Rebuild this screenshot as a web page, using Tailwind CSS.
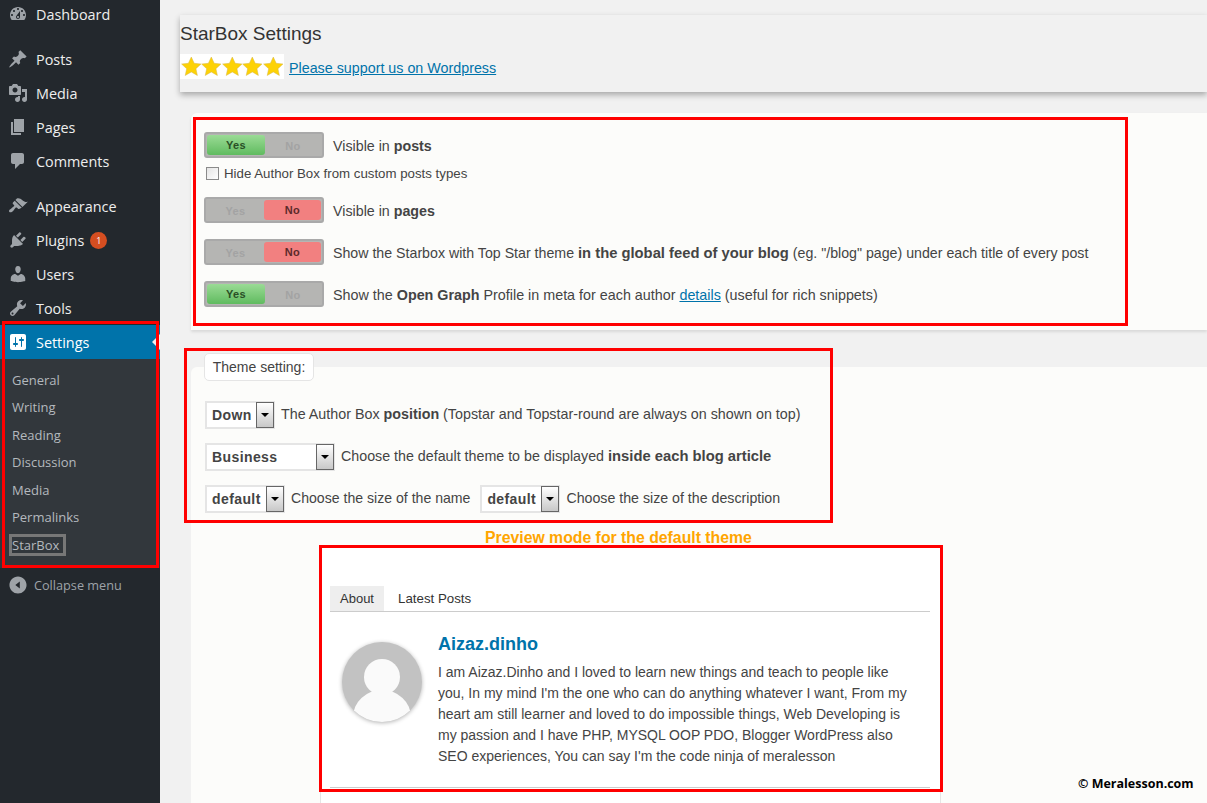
<!doctype html>
<html lang="en">
<head>
  <meta charset="UTF-8">
  <title>StarBox Settings</title>
  <script src="https://cdn.jsdelivr.net/npm/@tailwindcss/browser@4"></script>
</head>
<body class="relative h-[803px] w-[1207px] overflow-hidden bg-[#f1f1f1] font-['Liberation_Sans',sans-serif] text-[14.25px] leading-[21px] text-[#444]">
  <div class="flex h-[803px]">
    <!-- admin menu -->
    <nav class="h-full w-[160px] shrink-0 overflow-hidden bg-[#23282d] font-['Open_Sans',sans-serif] text-[14.4px] leading-[21px] text-[#eee]">
      <div class="-mt-[3px]">
        <a class="flex h-[34px] items-center"><svg class="mx-2 h-5 w-5 fill-[#9ea3a8]" viewBox="0 0 20 20"><path d="M3.76 16h12.48c1.1-1.37 1.76-3.11 1.76-5 0-4.42-3.58-8-8-8s-8 3.58-8 8c0 1.89.66 3.63 1.76 5zM10 4c.55 0 1 .45 1 1s-.45 1-1 1-1-.45-1-1 .45-1 1-1zM6 6c.55 0 1 .45 1 1s-.45 1-1 1-1-.45-1-1 .45-1 1-1zm8 0c.55 0 1 .45 1 1s-.45 1-1 1-1-.45-1-1 .45-1 1-1zm-5.37 5.55L12 7v6c0 1.1-.9 2-2 2s-2-.9-2-2c0-.57.24-1.08.63-1.45zM4 10c.55 0 1 .45 1 1s-.45 1-1 1-1-.45-1-1 .45-1 1-1zm12 0c.55 0 1 .45 1 1s-.45 1-1 1-1-.45-1-1 .45-1 1-1zm-5 3c0-.55-.45-1-1-1s-1 .45-1 1 .45 1 1 1 1-.45 1-1z"/></svg>Dashboard</a>
        <div class="h-[11px]"></div>
        <a class="flex h-[34px] items-center"><svg class="mx-2 h-5 w-5 fill-[#9ea3a8]" viewBox="0 0 20 20"><path d="M10.44 3.02l1.82-1.82 6.36 6.35-1.83 1.82c-1.05-.68-2.48-.57-3.41.36l-.75.75c-.92.93-1.04 2.35-.35 3.41l-1.83 1.82-2.41-2.41-2.8 2.79c-.42.42-3.38 2.71-3.8 2.29s1.86-3.39 2.28-3.81l2.79-2.79L4.1 9.36l1.83-1.82c1.05.69 2.48.57 3.4-.36l.75-.75c.93-.92 1.05-2.35.36-3.41z"/></svg>Posts</a>
        <a class="flex h-[34px] items-center"><svg class="mx-2 h-5 w-5 fill-[#9ea3a8]" viewBox="0 0 20 20"><path d="M13 11V4c0-.55-.45-1-1-1h-1.67L9 1H5L3.67 3H2c-.55 0-1 .45-1 1v7c0 .55.45 1 1 1h10c.55 0 1-.45 1-1zM7 4.5c1.38 0 2.5 1.12 2.5 2.5S8.38 9.5 7 9.5 4.5 8.38 4.5 7 5.62 4.5 7 4.5zM14 6h5v10.5c0 1.38-1.12 2.5-2.5 2.5S14 17.88 14 16.5s1.12-2.5 2.5-2.5c.17 0 .34.02.5.05V9h-3V6zm-4 8.05V13h2v3.5c0 1.38-1.12 2.5-2.5 2.5S7 17.88 7 16.5 8.12 14 9.5 14c.17 0 .34.02.5.05z"/></svg>Media</a>
        <a class="flex h-[34px] items-center"><svg class="mx-2 h-5 w-5 fill-[#9ea3a8]" viewBox="0 0 20 20"><path d="M6 15V2h10v13H6zm-1 1h8v2H3V5h2v11z"/></svg>Pages</a>
        <a class="flex h-[34px] items-center"><svg class="mx-2 h-5 w-5 fill-[#9ea3a8]" viewBox="0 0 20 20"><path d="M5 2h9c1.1 0 2 .9 2 2v7c0 1.1-.9 2-2 2h-2l-5 5v-5H5c-1.1 0-2-.9-2-2V4c0-1.1.9-2 2-2z"/></svg>Comments</a>
        <div class="h-[11px]"></div>
        <a class="flex h-[34px] items-center"><svg class="mx-2 h-5 w-5 fill-[#9ea3a8]" viewBox="0 0 20 20"><path d="M14.48 11.06L7.41 3.99l1.5-1.5c.5-.56 2.3-.47 3.51.32 1.21.8 1.43 1.28 2.91 2.1 1.18.64 2.45 1.26 4.45.85zm-.71.71L6.7 4.7 4.93 6.47c-.39.39-.39 1.02 0 1.41l1.06 1.06c.39.39.39 1.03 0 1.42-.6.6-1.43 1.11-2.21 1.69-.35.26-.7.53-1.01.84C1.43 13.23.4 14.89 1.41 15.9c1.01 1.01 2.67-.02 3.66-1.01.31-.31.58-.66.84-1.01.58-.78 1.09-1.61 1.69-2.21.39-.39 1.03-.39 1.42 0l1.06 1.06c.39.39 1.02.39 1.41 0z"/></svg>Appearance</a>
        <a class="flex h-[34px] items-center"><svg class="mx-2 h-5 w-5 fill-[#9ea3a8]" viewBox="0 0 20 20"><path d="M13.11 4.36L9.87 7.6 8 5.73l3.24-3.24c.35-.34 1.05-.2 1.56.32.52.51.66 1.21.31 1.55zm-8 1.77l.91-1.12 9.01 9.01-1.19.84c-.71.71-2.63 1.16-3.82 1.16H6.14L4.9 17.26c-.59.59-1.54.59-2.12 0-.59-.58-.59-1.53 0-2.12l1.24-1.24v-3.88c0-1.13.4-3.19 1.09-3.89zm7.26 3.97l3.24-3.24c.34-.35 1.04-.21 1.55.31.52.51.66 1.21.31 1.55l-3.24 3.25z"/></svg>Plugins<span class="ml-[6px] flex h-[17px] w-[17px] items-center justify-center rounded-full bg-[#d54e21] text-[9px] text-white">1</span></a>
        <a class="flex h-[34px] items-center"><svg class="mx-2 h-5 w-5 fill-[#9ea3a8]" viewBox="0 0 20 20"><path d="M10 9.25c-2.27 0-2.73-3.44-2.73-3.44C7 4.02 7.82 2 9.97 2c2.16 0 2.98 2.02 2.71 3.81 0 0-.41 3.44-2.68 3.44zm0 2.57L12.72 10c2.39 0 4.52 2.33 4.52 4.53v2.49s-3.65 1.13-7.24 1.13c-3.65 0-7.24-1.13-7.24-1.13v-2.49c0-2.25 1.94-4.48 4.47-4.48z"/></svg>Users</a>
        <a class="flex h-[34px] items-center"><svg class="mx-2 h-5 w-5 fill-[#9ea3a8]" viewBox="0 0 20 20"><path d="M16.68 9.77c-1.34 1.34-3.3 1.67-4.95.99l-5.41 6.52c-.99.99-2.59.99-3.58 0s-.99-2.59 0-3.57l6.52-5.42c-.68-1.65-.35-3.61.99-4.95 1.28-1.28 3.12-1.62 4.72-1.06l-2.89 2.89 2.82 2.82 2.86-2.87c.53 1.58.18 3.39-1.08 4.65zM3.81 16.21c.4.39 1.04.39 1.43 0 .4-.4.4-1.04 0-1.43-.39-.4-1.03-.4-1.43 0-.39.39-.39 1.03 0 1.43z"/></svg>Tools</a>
        <a class="relative flex h-[34px] items-center bg-[#0073aa] text-white"><svg class="mx-2 h-5 w-5 fill-white" viewBox="0 0 20 20"><path d="M18 16V4c0-1.1-.9-2-2-2H4c-1.1 0-2 .9-2 2v12c0 1.1.9 2 2 2h12c1.1 0 2-.9 2-2zM8 11h1c.55 0 1 .45 1 1s-.45 1-1 1H8v1.5c0 .28-.22.5-.5.5s-.5-.22-.5-.5V13H6c-.55 0-1-.45-1-1s.45-1 1-1h1V5.5c0-.28.22-.5.5-.5s.5.22.5.5V11zm5-2h-1c-.55 0-1-.45-1-1s.45-1 1-1h1V5.5c0-.28.22-.5.5-.5s.5.22.5.5V7h1c.55 0 1 .45 1 1s-.45 1-1 1h-1v5.5c0 .28-.22.5-.5.5s-.5-.22-.5-.5V9z"/></svg>Settings<span class="absolute right-0 top-[9px] border-y-[8px] border-r-[8px] border-y-transparent border-r-[#f1f1f1]"></span></a>
        <div class="flex h-[209px] flex-col bg-[#32373c] pl-3 pt-[7.5px] text-[13px] text-[#b4b9be]">
          <a class="flex h-[27.5px] items-center">General</a>
          <a class="flex h-[27.5px] items-center">Writing</a>
          <a class="flex h-[27.5px] items-center">Reading</a>
          <a class="flex h-[27.5px] items-center">Discussion</a>
          <a class="flex h-[27.5px] items-center">Media</a>
          <a class="flex h-[27.5px] items-center">Permalinks</a>
          <a class="flex h-[27.5px] items-center"><span class="-ml-[3px] border-[3px] border-[#777] leading-[16px]">StarBox&nbsp;</span></a>
        </div>
        <a class="flex h-[34px] items-center text-[12.7px] leading-[20px] text-[#9ea3a8]"><svg class="ml-[9px] mr-[7px] h-[18px] w-[18px] fill-[#9ea3a8]" viewBox="0 0 20 20"><path d="M10 .5c5.25 0 9.5 4.25 9.5 9.5s-4.25 9.5-9.5 9.5S.5 15.25.5 10 4.75.5 10 .5zM12 14V6l-5 4z"/></svg>Collapse menu</a>
      </div>
    </nav>

    <main class="min-w-0 flex-1">
      <!-- title card -->
      <header class="ml-5 mt-[15px] h-[77px] bg-[#f1f1f1] pt-[8px] shadow-[0_3px_6px_rgba(0,0,0,0.3)]">
        <h1 class="text-[19px] leading-[22px] text-[#333]">StarBox Settings</h1>
        <div class="mt-[8px] flex items-center">
          <div class="flex h-[25px] w-[104px] items-center justify-center bg-white">
            <svg class="h-[21px] w-[20.6px]" viewBox="0 0 20 20"><path fill="#fdd206" stroke="#d8b84a" stroke-width=".5" d="M10 .8l2.8 6.1 6.6.7-4.9 4.5 1.4 6.6-5.9-3.4-5.9 3.4 1.4-6.6L.6 7.6l6.6-.7z"/></svg>
            <svg class="h-[21px] w-[20.6px]" viewBox="0 0 20 20"><path fill="#fdd206" stroke="#d8b84a" stroke-width=".5" d="M10 .8l2.8 6.1 6.6.7-4.9 4.5 1.4 6.6-5.9-3.4-5.9 3.4 1.4-6.6L.6 7.6l6.6-.7z"/></svg>
            <svg class="h-[21px] w-[20.6px]" viewBox="0 0 20 20"><path fill="#fdd206" stroke="#d8b84a" stroke-width=".5" d="M10 .8l2.8 6.1 6.6.7-4.9 4.5 1.4 6.6-5.9-3.4-5.9 3.4 1.4-6.6L.6 7.6l6.6-.7z"/></svg>
            <svg class="h-[21px] w-[20.6px]" viewBox="0 0 20 20"><path fill="#fdd206" stroke="#d8b84a" stroke-width=".5" d="M10 .8l2.8 6.1 6.6.7-4.9 4.5 1.4 6.6-5.9-3.4-5.9 3.4 1.4-6.6L.6 7.6l6.6-.7z"/></svg>
            <svg class="h-[21px] w-[20.6px]" viewBox="0 0 20 20"><path fill="#fdd206" stroke="#d8b84a" stroke-width=".5" d="M10 .8l2.8 6.1 6.6.7-4.9 4.5 1.4 6.6-5.9-3.4-5.9 3.4 1.4-6.6L.6 7.6l6.6-.7z"/></svg>
          </div>
          <a class="ml-[5px] pt-[5px] text-[14.3px] text-[#0073aa] underline">Please support us on Wordpress</a>
        </div>
      </header>

      <!-- general options -->
      <section class="ml-[31px] mt-[21px] h-[217px] rounded-tl-md bg-[#fcfcfa] pl-[13px] pt-[19px] shadow-[0_2px_3px_rgba(0,0,0,0.1)]">
        <div class="flex h-[26px] items-center gap-[9px]">
          <div class="flex h-[26px] w-[120px] rounded-[3px] border-2 border-[#a9a9a9] bg-[#b5b5b3] p-px text-[11px] font-bold tracking-[0.4px]">
            <span class="flex w-[58px] items-center justify-center rounded-[3px] bg-gradient-to-b from-[#9adb95] to-[#5fbb5f] text-[#2a4f26]">Yes</span>
            <span class="flex w-[56px] items-center justify-center pt-[2px] text-[#a3a3a3]">No</span>
          </div>
          <p class="pt-[2px]">Visible in <b>posts</b></p>
        </div>
        <label class="ml-[2px] mt-[8px] flex h-[14px] items-center gap-[5px] text-[13.27px]">
          <span class="h-[13px] w-[13px] border border-[#8a8a8a] bg-gradient-to-br from-[#e4e4e4] to-white"></span>
          Hide Author Box from custom posts types
        </label>
        <div class="mt-[17px] flex h-[26px] items-center gap-[9px]">
          <div class="flex h-[26px] w-[120px] rounded-[3px] border-2 border-[#a9a9a9] bg-[#b5b5b3] p-px text-[11px] font-bold tracking-[0.4px]">
            <span class="flex w-[57px] items-center justify-center pt-[2px] text-[#a3a3a3]">Yes</span>
            <span class="flex w-[57px] items-center justify-center rounded-[3px] bg-[#f28080] text-[#5c2a2a]">No</span>
          </div>
          <p class="pt-[2px]">Visible in <b>pages</b></p>
        </div>
        <div class="mt-[16px] flex h-[26px] items-center gap-[9px]">
          <div class="flex h-[26px] w-[120px] rounded-[3px] border-2 border-[#a9a9a9] bg-[#b5b5b3] p-px text-[11px] font-bold tracking-[0.4px]">
            <span class="flex w-[57px] items-center justify-center pt-[2px] text-[#a3a3a3]">Yes</span>
            <span class="flex w-[57px] items-center justify-center rounded-[3px] bg-[#f28080] text-[#5c2a2a]">No</span>
          </div>
          <p class="pt-[2px] text-[14.2px]">Show the Starbox with Top Star theme <b class="text-[14.77px]">in the global feed of your blog</b> (eg. "/blog" page) under each title of every post</p>
        </div>
        <div class="mt-[16px] flex h-[26px] items-center gap-[9px]">
          <div class="flex h-[26px] w-[120px] rounded-[3px] border-2 border-[#a9a9a9] bg-[#b5b5b3] p-px text-[11px] font-bold tracking-[0.4px]">
            <span class="flex w-[58px] items-center justify-center rounded-[3px] bg-gradient-to-b from-[#9adb95] to-[#5fbb5f] text-[#2a4f26]">Yes</span>
            <span class="flex w-[56px] items-center justify-center pt-[2px] text-[#a3a3a3]">No</span>
          </div>
          <p class="pt-[2px] text-[14.33px]">Show the <b>Open Graph</b> Profile in meta for each author <a class="text-[#0073aa] underline">details</a> (useful for rich snippets)</p>
        </div>
      </section>

      <!-- theme options -->
      <section class="relative ml-[31px] mt-[37px] h-[436px] rounded-tl-md bg-[#fcfcfa] pl-[14px] pt-[34px]">
        <span class="absolute left-[13px] top-[-14px] flex h-[28px] w-[110px] items-center justify-center rounded-[5px] border border-[#e5e5e5] bg-white text-[14px]">Theme setting:</span>
        <div class="flex h-[28px] items-center gap-[6px]">
          <div class="flex h-[28px] w-[70px] items-center border-2 border-[#e5e5e5] bg-white pl-[5px] text-[14px] font-bold tracking-[0.4px]">
            <span class="flex-1">Down</span>
            <span class="-mr-[1px] flex h-[26px] w-[18px] items-center justify-center border border-[#666] bg-gradient-to-b from-[#fff] to-[#c8c8c8]"><span class="border-x-[4px] border-t-[4px] border-x-transparent border-t-black"></span></span>
          </div>
          <p class="pb-[2px] text-[14.3px]">The Author Box <b>position</b> (Topstar and Topstar-round are always on shown on top)</p>
        </div>
        <div class="mt-[14px] flex h-[28px] items-center gap-[6px]">
          <div class="flex h-[28px] w-[130px] items-center border-2 border-[#e5e5e5] bg-white pl-[5px] text-[14px] font-bold tracking-[0.4px]">
            <span class="flex-1">Business</span>
            <span class="-mr-[1px] flex h-[26px] w-[18px] items-center justify-center border border-[#666] bg-gradient-to-b from-[#fff] to-[#c8c8c8]"><span class="border-x-[4px] border-t-[4px] border-x-transparent border-t-black"></span></span>
          </div>
          <p class="pb-[2px]">Choose the default theme to be displayed <b class="text-[14.77px]">inside each blog article</b></p>
        </div>
        <div class="mt-[14px] flex h-[28px] items-center gap-[6px]">
          <div class="flex h-[28px] w-[80px] items-center border-2 border-[#e5e5e5] bg-white pl-[5px] text-[14px] font-bold tracking-[0.4px]">
            <span class="flex-1">default</span>
            <span class="-mr-[1px] flex h-[26px] w-[18px] items-center justify-center border border-[#666] bg-gradient-to-b from-[#fff] to-[#c8c8c8]"><span class="border-x-[4px] border-t-[4px] border-x-transparent border-t-black"></span></span>
          </div>
          <p class="pb-[2px] text-[14.1px]">Choose the size of the name</p>
          <div class="ml-[4px] flex h-[28px] w-[80px] items-center border-2 border-[#e5e5e5] bg-white pl-[5px] text-[14px] font-bold tracking-[0.4px]">
            <span class="flex-1">default</span>
            <span class="-mr-[1px] flex h-[26px] w-[18px] items-center justify-center border border-[#666] bg-gradient-to-b from-[#fff] to-[#c8c8c8]"><span class="border-x-[4px] border-t-[4px] border-x-transparent border-t-black"></span></span>
          </div>
          <p class="pb-[2px] text-[14.2px]">Choose the size of the description</p>
        </div>

        <p class="ml-[280px] mt-[15px] h-[19px] text-[15.8px] font-bold leading-[20px] text-[#ffa500]">Preview mode for the default theme</p>

        <!-- preview -->
        <div class="ml-[115px] h-[256px] w-[621px] border-x border-[#e5e5e5] bg-white pl-[9px] pr-[10px] pt-[39px] text-[14px] text-[#333]">
          <div class="flex h-[26px] border-b border-[#ccc]">
            <span class="flex w-[54px] items-center justify-center bg-[#eee] text-[13px]">About</span>
            <span class="ml-[14px] flex items-center text-[13.3px]">Latest Posts</span>
          </div>
          <div class="flex h-[176px] border-b border-[#ccc]">
            <div class="ml-[12px] mt-[30px] h-[80px] w-[80px] shrink-0 overflow-hidden rounded-full bg-[#c2c2c2] shadow-[0_1px_4px_rgba(0,0,0,0.3)]">
              <svg viewBox="0 0 80 80" class="h-20 w-20"><circle cx="40" cy="35" r="18" fill="#fafafa"/><ellipse cx="40" cy="75" rx="29" ry="27" fill="#fafafa"/></svg>
            </div>
            <div class="ml-[16px] min-w-0 flex-1 pt-[21px]">
              <h2 class="text-[18px] font-bold leading-[22px] text-[#0073aa]">Aizaz.dinho</h2>
              <p class="mt-[7px] leading-[21px] text-[#444]">I am Aizaz.Dinho and I loved to learn new things and teach to people like<br>you, In my mind I'm the one who can do anything whatever I want, From my<br>heart am still learner and loved to do impossible things, Web Developing is<br>my passion and I have PHP, MYSQL OOP PDO, Blogger WordPress also<br>SEO experiences, You can say I'm the code ninja of meralesson</p>
            </div>
          </div>
        </div>
      </section>
    </main>
  </div>

  <!-- red annotation boxes drawn over the screenshot -->
  <div class="absolute left-[2px] top-[321px] h-[247px] w-[157px] border-[3px] border-[#ff0000]"></div>
  <div class="absolute left-[193px] top-[117px] h-[209px] w-[935px] border-[3px] border-[#ff0000]"></div>
  <div class="absolute left-[184px] top-[348px] h-[175px] w-[649px] border-[3px] border-[#ff0000]"></div>
  <div class="absolute left-[319px] top-[545px] h-[247px] w-[624px] border-[3px] border-[#ff0000]"></div>
  <span class="absolute left-[1078px] top-[776px] font-['Open_Sans',sans-serif] text-[12.5px] font-bold leading-[16px] text-black">© Meralesson.com</span>
</body>
</html>
